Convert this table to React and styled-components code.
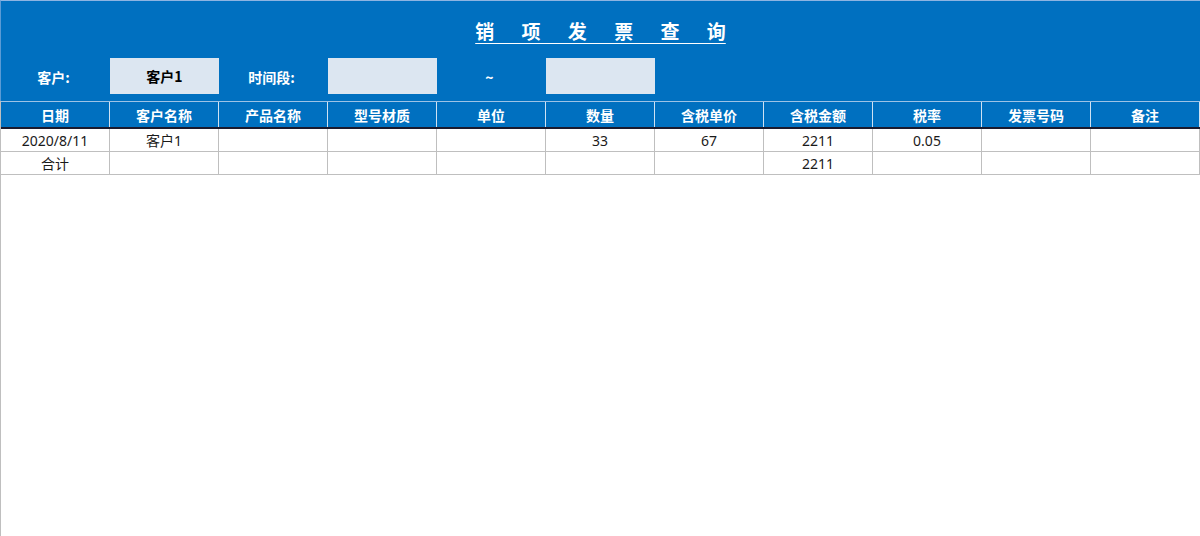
import styled, { createGlobalStyle } from 'styled-components';

const GlobalStyle = createGlobalStyle`
  body {
    margin: 0;
    background: #ffffff;
    font-family: 'Noto Sans', 'Noto Sans CJK SC', sans-serif;
  }
`;

const columns = [
  '日期',
  '客户名称',
  '产品名称',
  '型号材质',
  '单位',
  '数量',
  '含税单价',
  '含税金额',
  '税率',
  '发票号码',
  '备注',
];

const rows = [
  ['2020/8/11', '客户1', '', '', '', '33', '67', '2211', '0.05', '', ''],
  ['合计', '', '', '', '', '', '', '2211', '', '', ''],
];

function App() {
  return (
    <>
      <GlobalStyle />
      <Sheet>
        <Banner>
          <Title>
            <span>销 项 发 票 查 询</span>
          </Title>
          <FilterRow>
            <Label>客户:</Label>
            <InputBox $bold>客户1</InputBox>
            <Label>时间段:</Label>
            <InputBox />
            <Label>~</Label>
            <InputBox />
          </FilterRow>
        </Banner>

        <Table>
          <HeadRow>
            {columns.map(col => (
              <HeadCell key={col}>{col}</HeadCell>
            ))}
          </HeadRow>
          {rows.map((row, i) => (
            <DataRow key={i}>
              {row.map((value, j) => (
                <DataCell key={j}>{value}</DataCell>
              ))}
            </DataRow>
          ))}
        </Table>

        <Filler />
      </Sheet>
    </>
  );
}

const Sheet = styled.div`
  width: 1200px;
  height: 536px;
  display: flex;
  flex-direction: column;
  overflow: hidden;
`;

const Banner = styled.div`
  background-color: #0070c0;
  border-top: 1px solid #8db4e2;
  border-left: 1px solid #5b9bd5;
  padding-bottom: 7px;
`;

const Title = styled.div`
  height: 57px;
  display: flex;
  align-items: center;
  justify-content: center;

  span {
    color: #ffffff;
    font-family: 'Noto Sans CJK SC', sans-serif;
    font-size: 19px;
    font-weight: 700;
    word-spacing: 23px;
    text-decoration: underline;
    text-decoration-thickness: 1px;
    text-underline-offset: 4px;
    margin-top: 1px;
  }
`;

const FilterRow = styled.div`
  display: grid;
  grid-template-columns: repeat(11, 109px);
  height: 36px;
`;

const Label = styled.div`
  display: flex;
  align-items: center;
  justify-content: center;
  padding-top: 2px;
  padding-right: 4px;
  color: #ffffff;
  font-family: 'Noto Sans CJK SC', sans-serif;
  font-size: 14px;
  font-weight: 700;
`;

const InputBox = styled.div`
  display: flex;
  align-items: center;
  justify-content: center;
  background-color: #dce6f1;
  color: #000000;
  font-family: 'Noto Sans CJK SC', sans-serif;
  font-size: 14px;
  font-weight: ${props => (props.$bold ? 700 : 400)};
`;

const Table = styled.div`
  border-left: 1px solid #bfbfbf;
`;

const HeadRow = styled.div`
  display: grid;
  grid-template-columns: repeat(11, 109px);
  background-color: #0070c0;
  border-top: 1px solid #9dc3e6;
  border-bottom: 2px solid #1a1a2e;
`;

const HeadCell = styled.div`
  height: 25px;
  display: flex;
  align-items: center;
  justify-content: center;
  border-right: 1px solid #cfe2f3;
  color: #ffffff;
  font-family: 'Noto Sans CJK SC', sans-serif;
  font-size: 14px;
  font-weight: 700;
`;

const DataRow = styled.div`
  display: grid;
  grid-template-columns: repeat(11, 109px);
`;

const DataCell = styled.div`
  height: 23px;
  box-sizing: border-box;
  display: flex;
  align-items: center;
  justify-content: center;
  border-right: 1px solid #bfbfbf;
  border-bottom: 1px solid #bfbfbf;
  color: #1a1a1a;
  font-size: 14px;
`;

const Filler = styled.div`
  flex: 1;
  border-left: 1px solid #bfbfbf;
`;

export default App;
